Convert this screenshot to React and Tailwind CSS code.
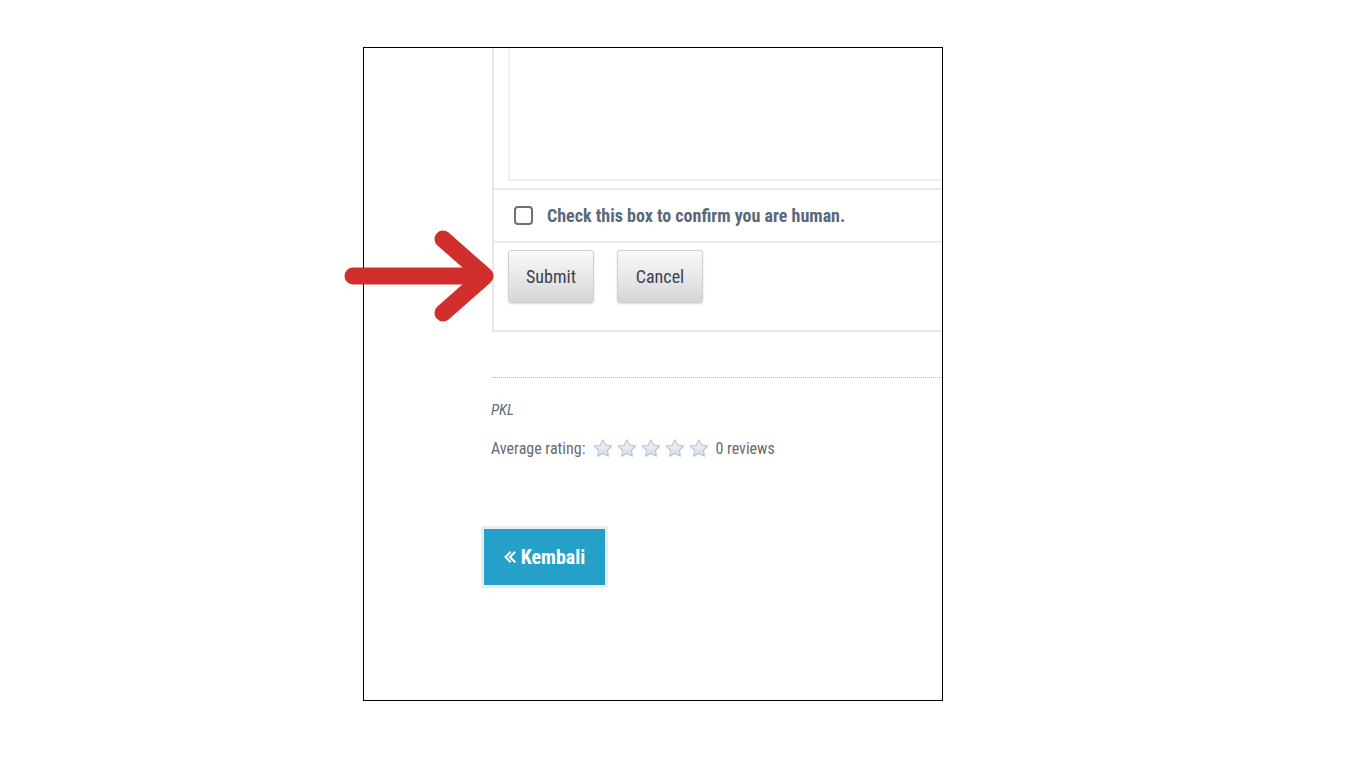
import React from 'react'

const cond = { fontFamily: '"Roboto Condensed", "Liberation Sans Narrow", Roboto, "Liberation Sans", sans-serif' }

const Star = () => (
    <svg width="20" height="20" viewBox="0 0 24 23" className="block">
        <defs>
            <linearGradient id="sg" x1="0" y1="0" x2="0" y2="1">
                <stop offset="0" stopColor="#f5f8fb" />
                <stop offset="1" stopColor="#d3dce8" />
            </linearGradient>
        </defs>
        <path
            d="M12 1.5L15.29 7.97L22.46 9.1L17.33 14.23L18.47 21.4L12 18.1L5.53 21.4L6.67 14.23L1.54 9.1L8.71 7.97Z"
            fill="url(#sg)"
            stroke="#b6c3d4"
            strokeWidth="1.3"
            strokeLinejoin="round"
        />
    </svg>
)

const Arrow = () => (
    <svg width="160" height="100" viewBox="0 0 160 100" className="absolute left-[337px] top-[226px]">
        <g stroke="#d12e2e" strokeWidth="17" strokeLinecap="round" strokeLinejoin="round" fill="none">
            <path d="M16 50 H145" />
            <path d="M106 13 L148 50 L106 87" />
        </g>
    </svg>
)

const App = () => {
    return (
        <div className="relative min-h-[768px] w-[1366px] bg-white pt-[47px] pl-[363px]">
            <div className="w-[580px] h-[654px] border border-black overflow-hidden bg-white">
                <div className="pl-[128px]">
                    {/* comment form panel, cut off at the top and right */}
                    <div className="w-[600px] border-l-2 border-b-2 border-[#e8e8e8]">
                        <div className="pl-[14px] pb-[7px]">
                            <div className="h-[133px] border-l-2 border-b-2 border-[#efefef]" />
                        </div>
                        <div className="border-t-2 border-[#ebebeb] h-[53px] flex items-center pl-[20px] gap-[14px]">
                            <span className="w-[19px] h-[19px] rounded-[4px] border-2 border-[#707070] bg-white" />
                            <span className="text-[18px] font-bold text-[#5b6878]" style={cond}>
                                Check this box to confirm you are human.
                            </span>
                        </div>
                        <div className="border-t-2 border-[#ebebeb] h-[89px] flex items-start pt-[7px] pl-[14px] gap-[23px]">
                            <button
                                className="w-[86px] h-[53px] rounded-[3px] border border-[#d0d0d0] bg-gradient-to-b from-[#fafafa] to-[#d6d6d6] text-[18px] text-[#3a4350] shadow-[0_1px_2px_rgba(0,0,0,0.15)]"
                                style={cond}
                            >
                                Submit
                            </button>
                            <button
                                className="w-[86px] h-[53px] rounded-[3px] border border-[#d0d0d0] bg-gradient-to-b from-[#fafafa] to-[#d6d6d6] text-[18px] text-[#3a4350] shadow-[0_1px_2px_rgba(0,0,0,0.15)]"
                                style={cond}
                            >
                                Cancel
                            </button>
                        </div>
                    </div>

                    <div className="mt-[45px] w-[600px] border-t border-dotted border-[#b8b8b8]" />

                    <p className="mt-[25px] -ml-[1px] text-[15px] italic text-[#5f6b7c] leading-none" style={cond}>
                        PKL
                    </p>
                    <div className="mt-[19px] -ml-[1px] flex items-center text-[16px] text-[#6a6a6a]" style={cond}>
                        <span>Average rating:</span>
                        <div className="ml-[8px] flex gap-[4px] -mt-[3px]">
                            <Star />
                            <Star />
                            <Star />
                            <Star />
                            <Star />
                        </div>
                        <span className="ml-[6px]">0 reviews</span>
                    </div>
                </div>

                <div className="pl-[117px] mt-[65px]">
                    <div className="inline-block p-[3px] bg-[#ececec] rounded-[2px]">
                        <div
                            className="w-[121px] h-[56px] bg-[#25a1c9] flex items-center justify-center gap-[5px] text-white text-[20px] font-bold"
                            style={cond}
                        >
                            <svg width="12" height="12" viewBox="0 0 12 12" className="block">
                                <g stroke="#ffffff" strokeWidth="2" fill="none" strokeLinecap="square">
                                    <path d="M6 1.5L1.5 6L6 10.5" />
                                    <path d="M10.5 1.5L6 6L10.5 10.5" />
                                </g>
                            </svg>
                            <span>Kembali</span>
                        </div>
                    </div>
                </div>
            </div>
            <Arrow />
        </div>
    )
}

export default App
